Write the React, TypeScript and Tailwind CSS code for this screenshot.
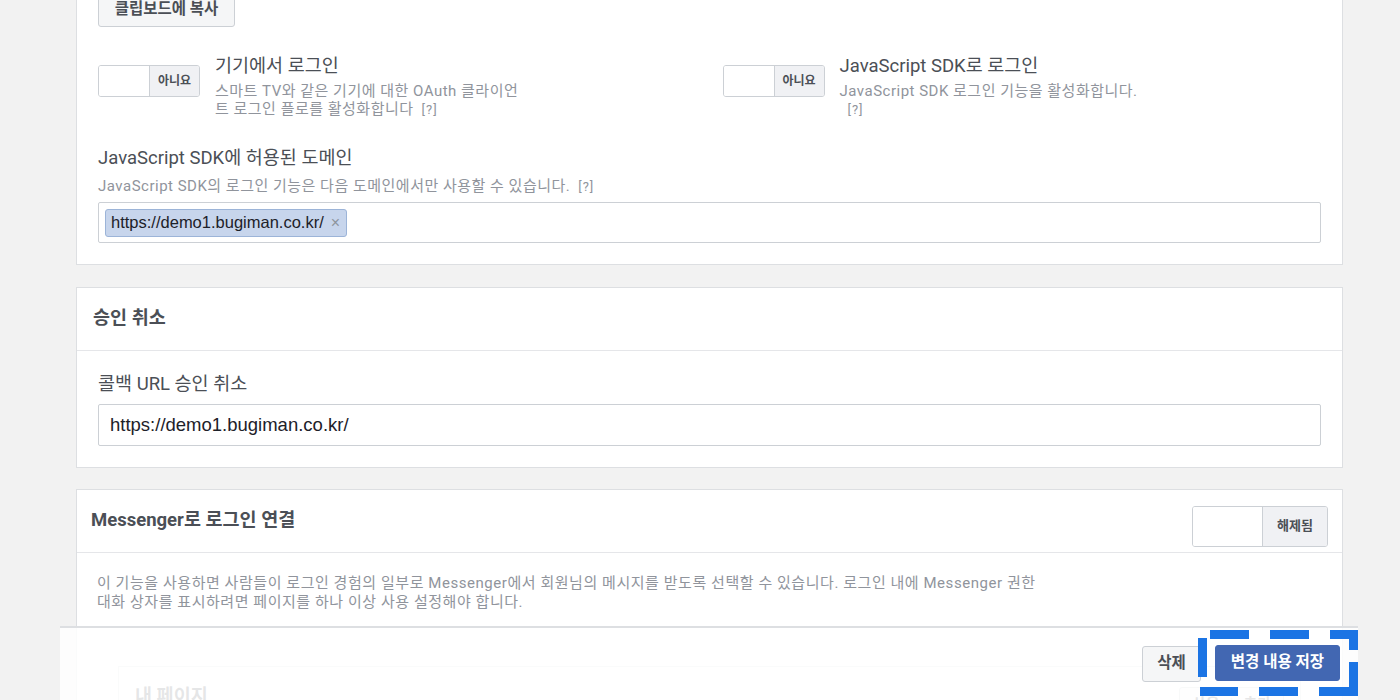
const sans = "font-['Roboto','Noto_Sans_CJK_KR',sans-serif]";
const arial = "font-['Liberation_Sans','Noto_Sans_CJK_KR',sans-serif]";

function Toggle({ label, big }: { label: string; big?: boolean }) {
  return (
    <div
      className={`flex shrink-0 overflow-hidden rounded-[3px] border border-[#ccd0d5] bg-white ${
        big ? "h-[41px] w-[136px]" : "h-[32px] w-[102px]"
      }`}
    >
      <div className="flex-1 bg-white" />
      <div
        className={`flex items-center justify-center border-l border-[#ccd0d5] bg-[#f0f1f4] font-bold text-[#4b4f56] ${
          big ? "w-[65px] text-[13px]" : "w-[50px] text-[12px]"
        }`}
      >
        {label}
      </div>
    </div>
  );
}

function Help() {
  return <span className="ml-2 text-[13px] tracking-[1px] text-[#90949c]">[?]</span>;
}

function LoginOption({ title, desc }: { title: string; desc: string }) {
  return (
    <div className="flex">
      <div className="mt-[10px]">
        <Toggle label="아니요" />
      </div>
      <div className="ml-[15px] max-w-[310px]">
        <div className="text-[18.5px] leading-[22px] text-[#4b4f56]">{title}</div>
        <p className="mt-[5px] text-[15px] leading-[18px] tracking-[0.5px] text-[#90949c]">
          {desc}
          <Help />
        </p>
      </div>
    </div>
  );
}

function Card({ children, className = "" }: { children: React.ReactNode; className?: string }) {
  return <section className={`border border-[#dddfe2] bg-white ${className}`}>{children}</section>;
}

export default function App() {
  return (
    <div className={`relative h-[700px] overflow-hidden bg-[#f2f2f2] ${sans}`}>
      <div className="pl-[76px] pr-[57px]">
        {/* 클라이언트 OAuth 설정 (잘림) */}
        <Card className="-mt-[30px] px-[21px] pb-[21px] pt-[22px]">
          <button className="h-[34px] w-[137px] rounded-[3px] border border-[#ccd0d5] bg-[#f5f6f7] text-[15.5px] font-bold text-[#4b4f56]">
            클립보드에 복사
          </button>

          <div className="mt-[28px] grid grid-cols-2 gap-x-[26px]">
            <LoginOption
              title="기기에서 로그인"
              desc="스마트 TV와 같은 기기에 대한 OAuth 클라이언트 로그인 플로를 활성화합니다"
            />
            <LoginOption
              title="JavaScript SDK로 로그인"
              desc="JavaScript SDK 로그인 기능을 활성화합니다."
            />
          </div>

          <div className="mt-[28px] text-[18.5px] leading-[22px] text-[#4b4f56]">
            JavaScript SDK에 허용된 도메인
          </div>
          <p className="mt-[8px] text-[15px] leading-[18px] tracking-[0.5px] text-[#90949c]">
            JavaScript SDK의 로그인 기능은 다음 도메인에서만 사용할 수 있습니다.
            <Help />
          </p>
          <div className="mt-[6px] flex h-[41px] items-center rounded-[2px] border border-[#ccd0d5] bg-white px-[6px]">
            <span
              className={`flex h-[28px] items-center gap-[7px] rounded-[3px] border border-[#9cb4d8] bg-[#c7d5ec] pl-[5px] pr-[6px] text-[16.5px] text-[#1d2129] ${arial}`}
            >
              https://demo1.bugiman.co.kr/
              <span className="text-[16px] leading-none text-[#8d949e]">×</span>
            </span>
          </div>
        </Card>

        {/* 승인 취소 */}
        <Card className="mt-[22px]">
          <header className="flex h-[63px] items-center border-b border-[#e5e6e9] px-[16px]">
            <h2 className="text-[18.5px] font-bold text-[#4b4f56]">승인 취소</h2>
          </header>
          <div className="px-[21px] pb-[21px] pt-[22px]">
            <div className="text-[18.5px] leading-[22px] text-[#4b4f56]">콜백 URL 승인 취소</div>
            <div
              className={`mt-[9px] flex h-[42px] items-center rounded-[2px] border border-[#ccd0d5] bg-white px-[11px] text-[18.5px] text-[#1d2129] ${arial}`}
            >
              https://demo1.bugiman.co.kr/
            </div>
          </div>
        </Card>

        {/* Messenger로 로그인 연결 */}
        <Card className="mt-[21px]">
          <header className="flex h-[63px] items-center justify-between border-b border-[#e5e6e9] pl-[14px] pr-[14px]">
            <h2 className="text-[18.5px] font-bold text-[#4b4f56]">Messenger로 로그인 연결</h2>
            <div className="mt-[10px]">
              <Toggle label="해제됨" big />
            </div>
          </header>
          <div className="px-[20px] pt-[21px]">
            <p className="max-w-[950px] text-[15px] leading-[19px] tracking-[0.55px] text-[#90949c]">
              이 기능을 사용하면 사람들이 로그인 경험의 일부로 Messenger에서 회원님의 메시지를 받도록 선택할 수 있습니다. 로그인 내에 Messenger 권한 대화 상자를 표시하려면 페이지를 하나 이상 사용 설정해야 합니다.
            </p>
            <div className="mx-[21px] mt-[54px] border border-[#dddfe2] bg-white">
              <div className="flex h-[60px] items-start justify-between px-[16px] pt-[16px]">
                <h3 className="text-[18.5px] font-bold text-[#4b4f56]">내 페이지</h3>
                <div className="mt-[4px] flex h-[34px] items-center rounded-[3px] border border-[#ccd0d5] bg-[#f5f6f7] px-[12px] text-[15px] font-bold text-[#4b4f56]">
                  사용 <span className="mx-[10px] text-[#ccd0d5]">|</span> 추가
                </div>
              </div>
            </div>
          </div>
        </Card>
      </div>

      {/* 하단 고정 저장 바 */}
      <footer className="absolute bottom-0 left-[60px] top-[626px] w-[1298px] border-t-2 border-[#dddfe2] bg-white/[0.86]">
        <div className="flex justify-end gap-[14px] pr-[18px] pt-[17px]">
          <button className="mt-[1px] h-[36px] w-[59px] rounded-[3px] border border-[#ccd0d5] bg-[#f5f6f7] text-[15.5px] font-bold text-[#4b4f56]">
            삭제
          </button>
          <button className="h-[36px] w-[125px] rounded-[3px] border border-[#4267b2] bg-[#4267b2] text-[15.5px] font-bold text-white">
            변경 내용 저장
          </button>
        </div>
      </footer>

      {/* 강조 점선 표시 */}
      <svg
        className="pointer-events-none absolute left-[1198px] top-[630px]"
        width="160"
        height="66"
        viewBox="0 0 160 66"
        fill="#1b74e4"
      >
        <rect x="12" y="0" width="39" height="9" />
        <rect x="72" y="0" width="39" height="9" />
        <rect x="132" y="0" width="28" height="9" />
        <rect x="151" y="0" width="9" height="20" />
        <rect x="151" y="32" width="9" height="34" />
        <rect x="121" y="57" width="39" height="9" />
        <rect x="61" y="57" width="39" height="9" />
        <rect x="2" y="57" width="38" height="9" />
        <rect x="0" y="8" width="9" height="39" />
      </svg>
    </div>
  );
}
